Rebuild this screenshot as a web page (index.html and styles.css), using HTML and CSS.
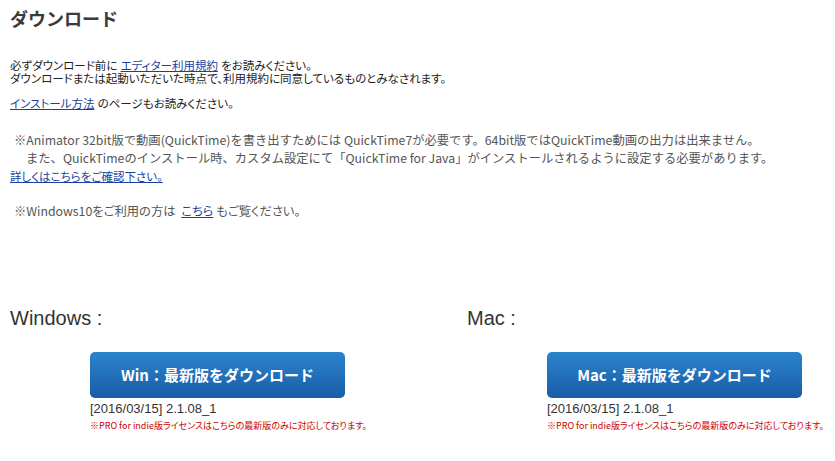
FILE: index.html
```html
<!DOCTYPE html>
<html lang="ja">
<head>
  <meta charset="UTF-8" />
  <meta name="viewport" content="width=device-width, initial-scale=1.0"/>
  <title>ダウンロード</title>
  <link rel="stylesheet" href="styles.css">
</head>
<body>

<div class="page">
  <h2 class="title">ダウンロード</h2>

  <p class="note">
    必ずダウンロード前に <a href="#">エディター利用規約</a> をお読みください。<br>
    ダウンロードまたは起動いただいた時点で、利用規約に同意しているものとみなされます。
  </p>

  <p class="note install"><a href="#">インストール方法</a> のページもお読みください。</p>

  <div class="info">
    <div>※Animator 32bit版で動画(QuickTime)を書き出すためには QuickTime7が必要です。64bit版ではQuickTime動画の出力は出来ません。</div>
    <div class="indent">また、QuickTimeのインストール時、カスタム設定にて「QuickTime for Java」がインストールされるように設定する必要があります。</div>
    <a class="more" href="#">詳しくはこちらをご確認下さい。</a>
  </div>

  <div class="info win10">※Windows10をご利用の方は <a href="#">こちら</a> もご覧ください。</div>

  <div class="downloads">
    <div class="platform">
      <div class="os">Windows :</div>
      <div class="dl">
        <a class="btn" href="#">Win：最新版をダウンロード</a>
        <div class="ver">[2016/03/15] 2.1.08_1</div>
        <div class="pro">※PRO for indie版ライセンスはこちらの最新版のみに対応しております。</div>
      </div>
    </div>
    <div class="platform">
      <div class="os">Mac :</div>
      <div class="dl">
        <a class="btn" href="#">Mac：最新版をダウンロード</a>
        <div class="ver">[2016/03/15] 2.1.08_1</div>
        <div class="pro">※PRO for indie版ライセンスはこちらの最新版のみに対応しております。</div>
      </div>
    </div>
  </div>
</div>

</body>
</html>
```

FILE: styles.css
```css
body {
  margin: 0;
  background: #fff;
  font-family: "Noto Sans CJK JP", sans-serif;
  color: #222;
}
a {
  color: #1b3f9e;
}
.page {
  padding: 0 10px;
}
.title {
  margin: 0;
  font-size: 18px;
  line-height: 36px;
  font-weight: bold;
  color: #3a3a3a;
}
.note {
  margin: 24px 0 0;
  font-family: "Liberation Sans", "Noto Sans CJK JP", sans-serif;
  font-size: 11.5px;
  line-height: 13px;
  font-feature-settings: "palt";
}
.install {
  margin-top: 12px;
}
.info {
  margin-top: 20px;
  padding-left: 4px;
  font-size: 12.3px;
  line-height: 18px;
  color: #555;
}
.indent {
  padding-left: 12px;
}
.more {
  display: block;
  margin-left: -4px;
  font-size: 11.5px;
  font-feature-settings: "palt";
}
.win10 {
  margin-top: 17px;
  font-feature-settings: "palt";
}
.win10 a {
  margin-left: 3px;
}
.downloads {
  display: flex;
  margin-top: 86px;
}
.platform {
  width: 457px;
  flex-shrink: 0;
}
.platform + .platform {
  width: auto;
}
.os {
  font-family: "Liberation Sans", Arial, sans-serif;
  font-size: 20px;
  line-height: 24px;
  color: #333;
}
.dl {
  margin: 22px 0 0 80px;
}
.btn {
  display: block;
  width: 255px;
  height: 46px;
  line-height: 46px;
  text-align: center;
  border-radius: 5px;
  background: linear-gradient(#2a84cc, #1a5ca8);
  color: #fff;
  font-size: 15px;
  font-weight: bold;
  text-decoration: none;
}
.ver {
  margin-top: 3px;
  font-family: "Liberation Sans", Arial, sans-serif;
  font-size: 13px;
  line-height: 16px;
  color: #333;
}
.pro {
  margin-top: 3px;
  font-size: 9px;
  line-height: 12px;
  color: #cc0000;
  white-space: nowrap;
  font-feature-settings: "palt";
}
```
